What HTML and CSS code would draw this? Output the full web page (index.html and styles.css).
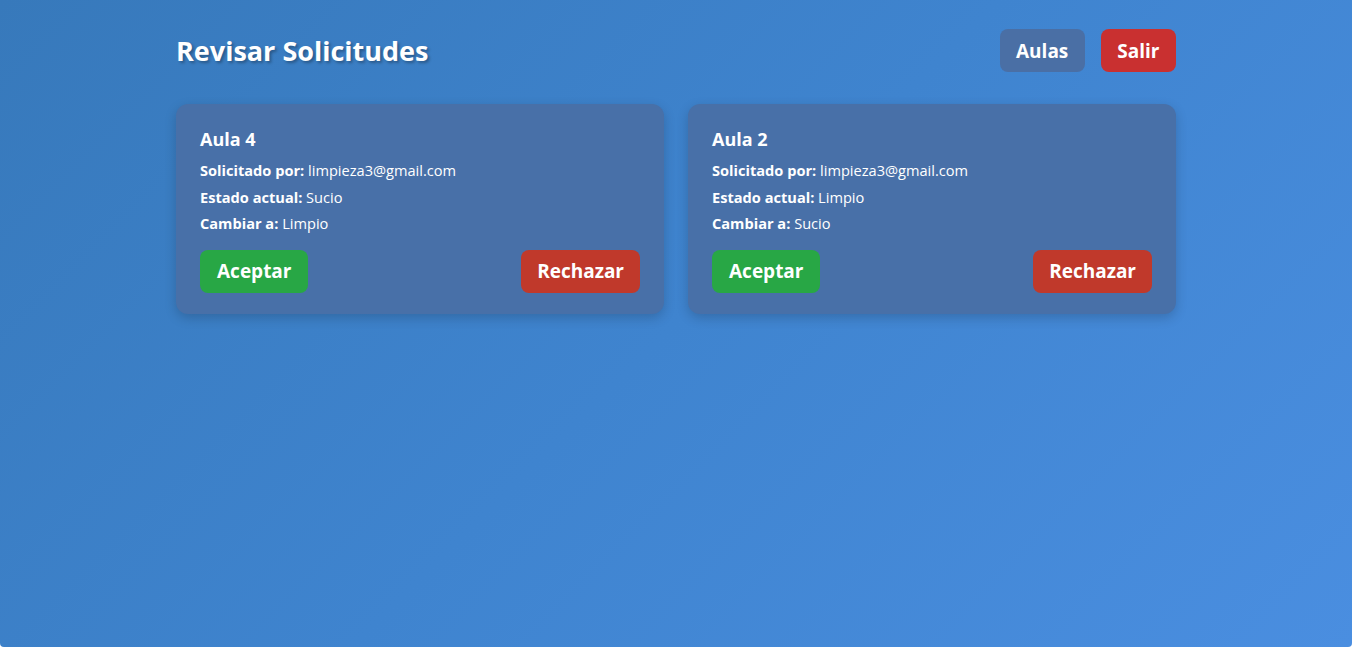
FILE: index.html
```html
<!DOCTYPE html>
<html lang="es">
<head>
<meta charset="utf-8">
<title>Revisar Solicitudes</title>
<link rel="stylesheet" href="styles.css">
</head>
<body>
<div class="page">
  <div class="wrap">
    <header class="top">
      <h1 class="title">Revisar Solicitudes</h1>
      <nav class="nav">
        <button class="btn btn-nav">Aulas</button>
        <button class="btn btn-exit">Salir</button>
      </nav>
    </header>
    <main class="grid">
      <section class="card">
        <h2 class="card-title">Aula 4</h2>
        <p class="row"><strong>Solicitado por:</strong> limpieza3@gmail.com</p>
        <p class="row"><strong>Estado actual:</strong> Sucio</p>
        <p class="row"><strong>Cambiar a:</strong> Limpio</p>
        <div class="actions">
          <button class="btn btn-ok">Aceptar</button>
          <button class="btn btn-no">Rechazar</button>
        </div>
      </section>
      <section class="card">
        <h2 class="card-title">Aula 2</h2>
        <p class="row"><strong>Solicitado por:</strong> limpieza3@gmail.com</p>
        <p class="row"><strong>Estado actual:</strong> Limpio</p>
        <p class="row"><strong>Cambiar a:</strong> Sucio</p>
        <div class="actions">
          <button class="btn btn-ok">Aceptar</button>
          <button class="btn btn-no">Rechazar</button>
        </div>
      </section>
    </main>
  </div>
</div>
</body>
</html>
```
FILE: styles.css
```css
* { box-sizing: border-box; }
html, body { margin: 0; padding: 0; background: #ffffff; }
body {
  font-family: "Segoe UI", "Open Sans", "Noto Sans", sans-serif;
  color: #ffffff;
}
.page {
  height: 647px;
  background: linear-gradient(135deg, #3779bb 0%, #3f84cf 50%, #4a8ee0 100%);
  border-radius: 0 0 4px 4px;
  padding: 29px 0 0;
}
.wrap {
  width: 1000px;
  margin: 0 auto;
}
.top {
  display: flex;
  justify-content: space-between;
  align-items: center;
  height: 43px;
}
.title {
  margin: 0;
  font-size: 27px;
  font-weight: 700;
  text-shadow: 2px 2px 3px rgba(0, 0, 0, 0.3);
}
.nav { display: flex; gap: 16px; }
.btn {
  border: none;
  color: #ffffff;
  font-family: inherit;
  font-weight: 700;
  font-size: 19px;
  height: 43px;
  padding: 0 16px;
  border-radius: 8px;
  cursor: pointer;
}
.btn-nav { background: #4a6fa5; padding: 0 16.5px; }
.btn-exit { background: #c93030; padding: 0 16.5px; }
.btn-ok { background: #28a745; padding: 0 17px; }
.btn-no { background: #c0392b; }
.grid {
  display: grid;
  grid-template-columns: 1fr 1fr;
  gap: 24px;
  margin-top: 32px;
}
.card {
  background: #4870a8;
  border-radius: 12px;
  padding: 23px 24px 21px;
  box-shadow: 0 4px 12px rgba(0, 0, 0, 0.18);
}
.card-title {
  margin: 0 0 6px;
  font-size: 18px;
  font-weight: 700;
  line-height: 24px;
}
.row {
  margin: 0;
  font-size: 14.6px;
  line-height: 26.5px;
}
.actions {
  display: flex;
  justify-content: space-between;
  margin-top: 13px;
}
```
